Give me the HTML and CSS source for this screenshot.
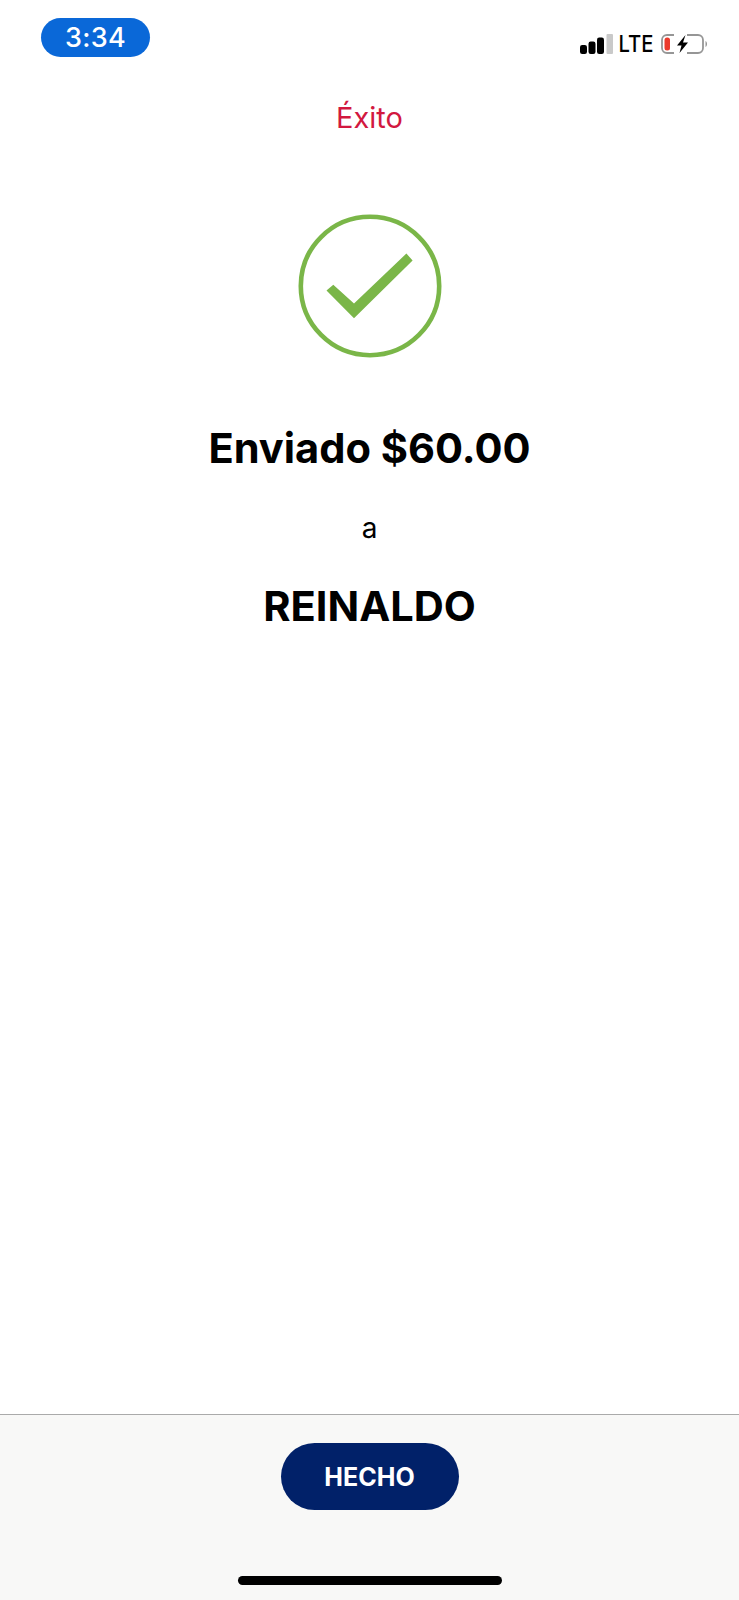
FILE: index.html
```html
<!DOCTYPE html>
<html lang="es">
<head>
  <meta charset="UTF-8" />
  <meta name="viewport" content="width=device-width, initial-scale=1.0" />
  <title>Éxito</title>
  <link rel="stylesheet" href="styles.css">
</head>
<body>
  <div class="status-bar">
    <div class="time-pill">3:34</div>
    <div class="status-icons">
      <svg class="signal" width="33" height="20" viewBox="0 0 33 20">
        <rect x="0" y="11" width="7" height="9" rx="2.2" fill="#000" />
        <rect x="8.5" y="7.5" width="7" height="12.5" rx="2.2" fill="#000" />
        <rect x="17" y="3.5" width="7" height="16.5" rx="2.2" fill="#000" />
        <rect x="26.5" y="0" width="6.5" height="20" rx="1" fill="#c9c9c9" />
      </svg>
      <span class="network">LTE</span>
      <svg class="battery" width="47" height="20" viewBox="0 0 47 20">
        <rect x="1" y="1" width="41" height="18" rx="5" fill="none" stroke="#969696" stroke-width="1.8" />
        <path d="M44.5 7 C46.5 8 46.5 12 44.5 13 Z" fill="#969696" />
        <path d="M13 0 h13 v20 h-13 z" fill="#fff" />
        <rect x="3.5" y="3.5" width="5.5" height="13" rx="2.5" fill="#ec3a2c" />
        <path d="M24.5 1 L16 11.5 H20.5 L18.5 19 L27 8.5 H22 Z" fill="#000" />
      </svg>
    </div>
  </div>

  <header class="title">Éxito</header>

  <main class="content">
    <svg class="check" width="144" height="144" viewBox="0 0 144 144">
      <circle cx="72" cy="72" r="69.2" fill="none" stroke="#7ab648" stroke-width="4.6" />
      <path d="M28.5 76.5 L35.3 70.8 L56 89.5 L108.4 39.5 L114.6 46.5 L56 104.3 Z" fill="#7ab648" />
    </svg>
    <h1 class="big-line">Enviado $60.00</h1>
    <p class="small-line">a</p>
    <h2 class="big-line">REINALDO</h2>
  </main>

  <footer class="footer">
    <button class="done-button">HECHO</button>
    <div class="home-bar"></div>
  </footer>
</body>
</html>
```

FILE: styles.css
```css
*, *::before, *::after { box-sizing: border-box; }
body { display: flex; flex-direction: column; min-height: 100vh; margin: 0; font-family: 'Inter', 'Liberation Sans', sans-serif; background: #fff; color: #000; }

/* Status bar */
.status-bar { display: flex; justify-content: space-between; align-items: flex-start; height: 100px; padding: 18px 31px 0 41px; }
.time-pill { width: 109px; height: 39px; display: flex; align-items: center; justify-content: center; border-radius: 20px; background: #0a68d8; color: #fff; font-size: 27px; font-weight: 500; letter-spacing: 0.3px; }
.status-icons { display: flex; align-items: center; gap: 5px; margin-top: 16px; }
.signal { display: block; }
.network { font-size: 23px; font-weight: 500; line-height: 20px; transform: scaleX(0.88); margin: 0 -2px; }
.battery { display: block; margin-left: 2px; }

/* Title */
.title { text-align: center; font-size: 29px; line-height: 36px; color: #d2183f; }

/* Main */
.content { flex: 1; display: flex; flex-direction: column; align-items: center; padding-top: 78px; }
.check { display: block; }
.big-line { margin: 0; font-size: 41.6px; line-height: 50px; font-weight: 700; }
.content h1 { margin-top: 65px; }
.small-line { margin: 38px 0 36px; font-size: 28px; line-height: 34px; }

/* Footer */
.footer { height: 186px; display: flex; flex-direction: column; align-items: center; border-top: 1px solid #aaa; background: #f8f8f7; padding-top: 28px; }
.done-button { width: 178px; height: 67px; border: none; border-radius: 34px; background: #012169; color: #fff; font-family: inherit; font-size: 25px; font-weight: 700; }
.home-bar { width: 264px; height: 9px; margin-top: 66px; border-radius: 5px; background: #000; }
```
